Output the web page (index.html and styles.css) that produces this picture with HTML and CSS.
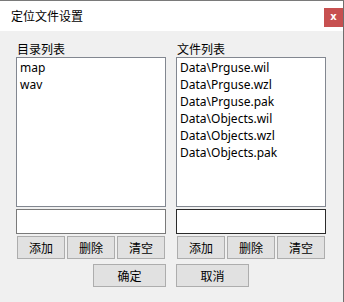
FILE: index.html
```html
<!DOCTYPE html>
<html>
<head>
<meta charset="utf-8">
<link rel="stylesheet" href="styles.css">
</head>
<body>
<div class="window">
  <div class="titlebar">
    <span class="title">定位文件设置</span>
    <span class="close">x</span>
  </div>
  <div class="content">
    <div class="columns">
      <div class="col">
        <div class="label">目录列表</div>
        <div class="list">
          <div class="item">map</div>
          <div class="item">wav</div>
        </div>
        <div class="input"></div>
        <div class="btnrow">
          <button class="btn">添加</button>
          <button class="btn">删除</button>
          <button class="btn">清空</button>
        </div>
      </div>
      <div class="col">
        <div class="label">文件列表</div>
        <div class="list">
          <div class="item">Data\Prguse.wil</div>
          <div class="item">Data\Prguse.wzl</div>
          <div class="item">Data\Prguse.pak</div>
          <div class="item">Data\Objects.wil</div>
          <div class="item">Data\Objects.wzl</div>
          <div class="item">Data\Objects.pak</div>
        </div>
        <div class="input focused"></div>
        <div class="btnrow">
          <button class="btn">添加</button>
          <button class="btn">删除</button>
          <button class="btn">清空</button>
        </div>
      </div>
    </div>
    <div class="columns footer">
      <div class="foot-left"><button class="btn wide">确定</button></div>
      <div class="foot-right"><button class="btn wide">取消</button></div>
    </div>
  </div>
</div>
</body>
</html>
```
FILE: styles.css
```css
html, body {
  margin: 0;
  padding: 0;
  background: #f0f0f0;
}
body {
  font-family: "Noto Sans", "Noto Sans CJK SC", sans-serif;
  font-size: 12px;
  color: #000;
}
.window {
  box-sizing: border-box;
  width: 344px;
  height: 302px;
  border-top: 1px solid #7a7a7a;
  border-right: 1px solid #6e6e6e;
  background: #f0f0f0;
  overflow: hidden;
}
.titlebar {
  height: 30px;
  background: #fff;
  display: flex;
  align-items: center;
  justify-content: space-between;
  padding-left: 11px;
}
.title {
  font-size: 12px;
  line-height: 16px;
  font-family: "Noto Sans CJK SC", sans-serif;
}
.close {
  width: 19px;
  height: 19px;
  margin-top: 2px;
  background: #c75050;
  color: #fff;
  font-family: "DejaVu Sans", sans-serif;
  font-weight: bold;
  font-size: 10px;
  line-height: 17px;
  text-align: center;
}
.content {
  padding: 9px 0 0 16px;
}
.columns {
  display: grid;
  grid-template-columns: 150px 150px;
  column-gap: 10px;
}
.label {
  height: 17px;
  line-height: 17px;
  font-family: "Noto Sans CJK SC", sans-serif;
  padding-left: 1px;
}
.list {
  box-sizing: border-box;
  height: 150px;
  border: 1px solid #828790;
  background: #fff;
  padding-top: 1px;
}
.item {
  height: 17px;
  line-height: 17px;
  padding-left: 3px;
  white-space: nowrap;
}
.input {
  box-sizing: border-box;
  height: 25px;
  margin-top: 2px;
  border: 1px solid #7a7a7a;
  background: #fff;
}
.input.focused {
  border-color: #2b2b2b;
}
.btnrow {
  display: flex;
  gap: 2px;
  margin-top: 2px;
  padding-left: 1px;
}
.btn {
  box-sizing: border-box;
  width: 48px;
  height: 23px;
  margin: 0;
  padding: 0;
  border: 1px solid #adadad;
  background: #e1e1e1;
  font-family: "Noto Sans CJK SC", sans-serif;
  font-size: 12px;
  line-height: 21px;
  color: #000;
}
.btn.wide {
  width: 73px;
}
.footer {
  margin-top: 5px;
}
.foot-left {
  display: flex;
  justify-content: flex-end;
}
.foot-right {
  display: flex;
  justify-content: flex-start;
}
```
